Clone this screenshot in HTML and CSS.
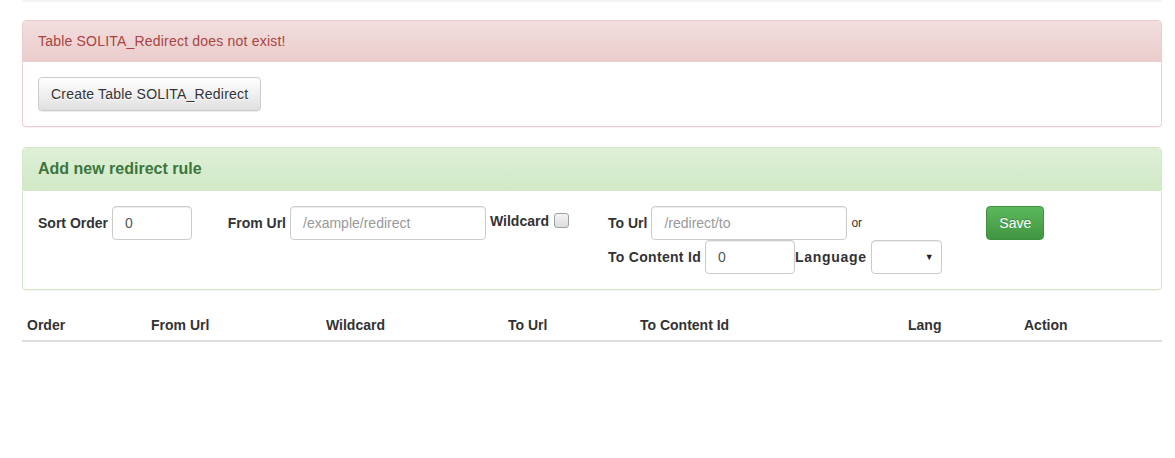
FILE: index.html
```html
<!DOCTYPE html>
<html>
<head>
<meta charset="utf-8">
<link rel="stylesheet" href="styles.css">
</head>
<body>
<div class="page">
  <div class="prev-edge"></div>

  <div class="panel panel-danger">
    <div class="panel-heading spaced">Table SOLITA_Redirect does not exist!</div>
    <div class="panel-body">
      <button class="btn btn-default spaced">Create Table SOLITA_Redirect</button>
    </div>
  </div>

  <div class="panel panel-success">
    <div class="panel-heading"><h3 class="panel-title">Add new redirect rule</h3></div>
    <div class="panel-body">
      <div class="row">
        <div class="col col-2">
          <div class="field">
            <label class="lbl">Sort Order</label>
            <div class="input w80">0</div>
          </div>
        </div>
        <div class="col col-4">
          <div class="field">
            <label class="lbl">From Url</label>
            <div class="input w196 ph">/example/redirect</div>
            <label class="lbl lbl-top">Wildcard</label>
            <span class="checkbox"></span>
          </div>
        </div>
        <div class="col col-4 col-to">
          <div class="field">
            <label class="lbl">To Url</label>
            <div class="input w196 ph">/redirect/to</div>
            <span class="or">or</span>
          </div>
          <div class="field">
            <label class="lbl lbl-wide">To Content Id</label>
            <div class="input w90">0</div>
            <label class="lbl lbl-wider">Language</label>
            <div class="input select"><span class="caret">▼</span></div>
          </div>
        </div>
        <div class="col col-2">
          <button class="btn btn-success">Save</button>
        </div>
      </div>
    </div>
  </div>

  <table class="table">
    <thead>
      <tr>
        <th class="c1">Order</th>
        <th class="c2">From Url</th>
        <th class="c3">Wildcard</th>
        <th class="c4">To Url</th>
        <th class="c5">To Content Id</th>
        <th class="c6">Lang</th>
        <th class="c7">Action</th>
      </tr>
    </thead>
    <tbody></tbody>
  </table>
</div>
</body>
</html>
```

FILE: styles.css
```css
* { box-sizing: border-box; }
html, body { margin: 0; padding: 0; background: #fff; }
body {
  font-family: "Liberation Sans", Arial, sans-serif;
  font-size: 14px;
  line-height: 20px;
  color: #333;
}
.page {
  width: 1140px;
  margin-left: 22px;
}
.prev-edge {
  height: 2px;
  background: #f4f4f4;
  border-radius: 0 0 4px 4px;
  margin-bottom: 18px;
}
.spaced { letter-spacing: 0.2px; }
.panel {
  border: 1px solid #ddd;
  border-radius: 4px;
  margin-bottom: 20px;
  background: #fff;
  box-shadow: 0 1px 1px rgba(0,0,0,0.05);
}
.panel-heading {
  padding: 10px 15px;
  border-bottom: 1px solid transparent;
  border-radius: 3px 3px 0 0;
}
.panel-danger { border-color: #ebccd1; }
.panel-danger .panel-heading {
  color: #a94442;
  background: linear-gradient(to bottom, #f2dede 0%, #ebcccc 100%);
  border-bottom-color: #ebccd1;
}
.panel-success { border-color: #d6e9c6; }
.panel-success .panel-heading {
  color: #3c763d;
  background: linear-gradient(to bottom, #dff0d8 0%, #d0e9c6 100%);
  border-bottom-color: #d6e9c6;
  padding: 10px 15px 11px;
}
.panel-title {
  margin: 0;
  font-size: 16px;
  font-weight: bold;
  line-height: 21px;
}
.panel-body { padding: 15px; }

.btn {
  display: inline-block;
  font-family: inherit;
  font-size: 14px;
  line-height: 20px;
  height: 34px;
  padding: 6px 12px;
  border: 1px solid #ccc;
  border-radius: 4px;
  cursor: pointer;
}
.btn-default {
  color: #333;
  background: linear-gradient(to bottom, #fff 0%, #e0e0e0 100%);
  border-color: #ccc;
  text-shadow: 0 1px 0 #fff;
  box-shadow: inset 0 1px 0 rgba(255,255,255,.15), 0 1px 1px rgba(0,0,0,.075);
}
.btn-success {
  color: #fff;
  background: linear-gradient(to bottom, #5cb85c 0%, #419641 100%);
  border-color: #3e8f3e;
  text-shadow: 0 -1px 0 rgba(0,0,0,.2);
  width: 58px;
  padding: 6px 0;
}

.row {
  display: grid;
  grid-template-columns: 2fr 4fr 4fr 2fr;
  margin: 0 -15px;
}
.col { padding: 0 15px; }
.col-to { padding-left: 16px; }
.field {
  display: flex;
  align-items: center;
  height: 34px;
}
.lbl {
  font-weight: bold;
  margin-right: 4px;
  white-space: nowrap;
}
.lbl-wide { letter-spacing: 0.3px; }
.lbl-wider { letter-spacing: 0.7px; }
.lbl-top { align-self: flex-start; margin-top: 5px; margin-left: 4px; }
.input {
  height: 34px;
  padding: 6px 12px;
  border: 1px solid #ccc;
  border-radius: 4px;
  background: #fff;
  color: #555;
  box-shadow: inset 0 1px 1px rgba(0,0,0,.075);
}
.ph { color: #999; }
.w80 { width: 80px; }
.w90 { width: 90px; }
.w196 { width: 196px; }
.checkbox {
  display: inline-block;
  width: 15px;
  height: 15px;
  border: 1px solid #a0a0a0;
  border-radius: 3px;
  background: linear-gradient(to bottom, #f4f4f4, #dcdcdc);
  align-self: flex-start;
  margin-top: 7px;
  margin-left: 1px;
}
.or {
  font-size: 12px;
  margin-left: 4px;
  color: #333;
}
.select {
  width: 71px;
  display: flex;
  justify-content: flex-end;
  align-items: center;
  padding: 0 7px 0 0;
}
.caret {
  font-size: 9px;
  color: #222;
  line-height: 10px;
}

.table {
  width: 1140px;
  border-collapse: collapse;
  border-spacing: 0;
  margin-bottom: 20px;
}
.table th {
  text-align: left;
  font-weight: bold;
  padding: 5px;
  line-height: 20px;
  border-bottom: 2px solid #ddd;
  vertical-align: bottom;
}
.c1 { width: 124px; }
.c2 { width: 175px; }
.c3 { width: 182px; }
.c4 { width: 132px; }
.c5 { width: 268px; }
.c6 { width: 116px; }
.c7 { width: 143px; }
```
